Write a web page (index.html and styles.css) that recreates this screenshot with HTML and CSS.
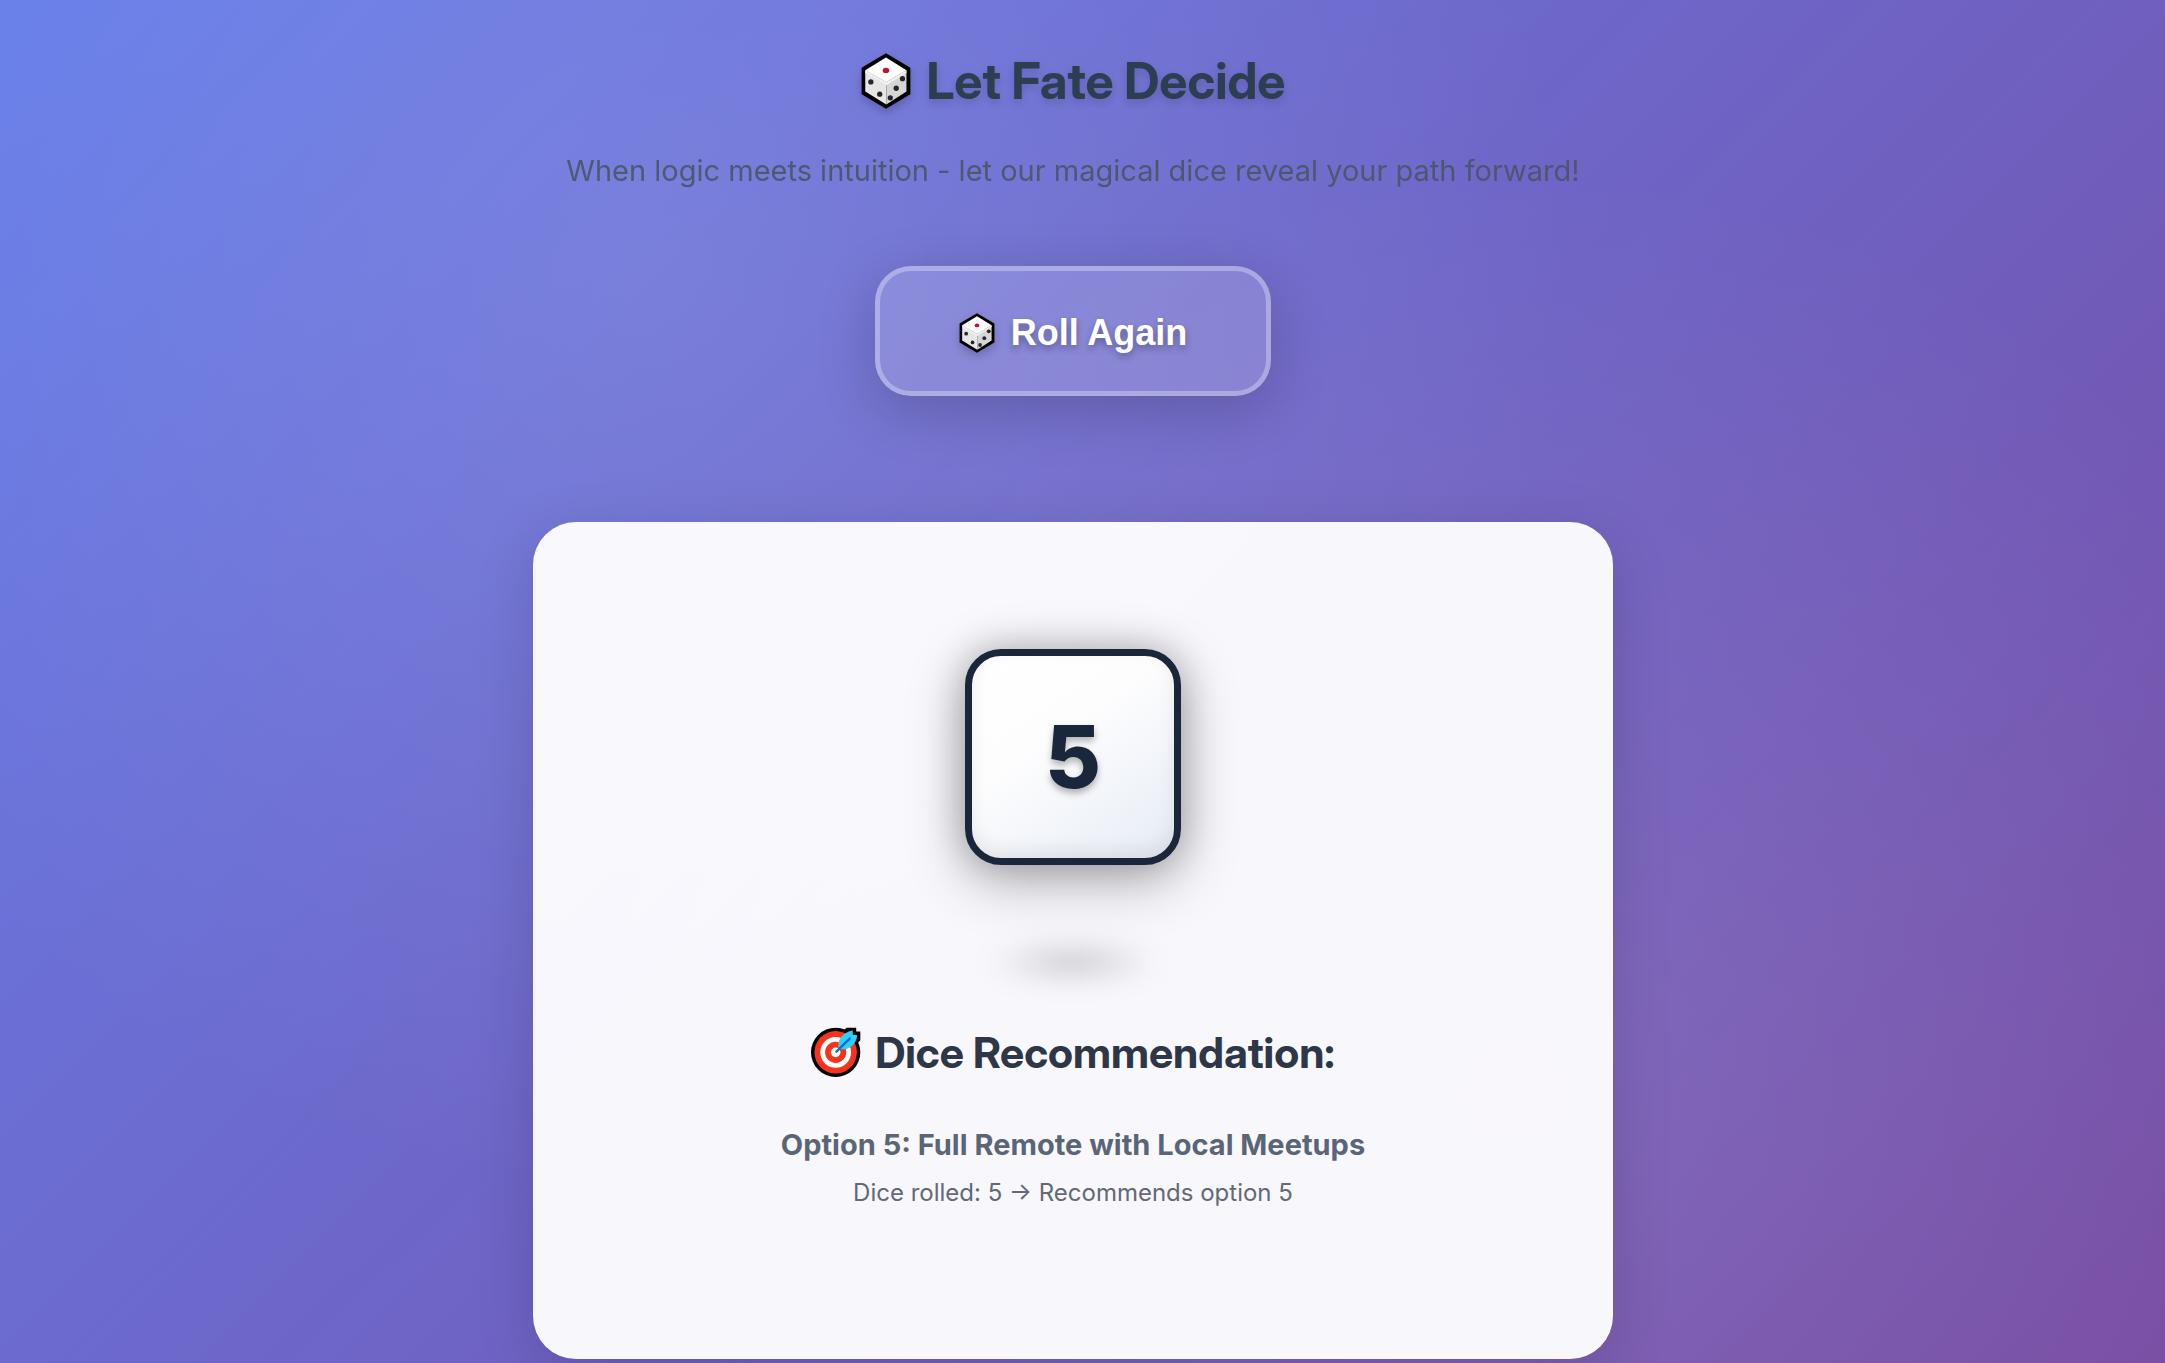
FILE: index.html
```html
<!doctype html>
<html lang="en">
<head>
<meta charset="utf-8">
<title>Let Fate Decide</title>
<link rel="stylesheet" href="styles.css">
</head>

<body>

<svg class="sprites" aria-hidden="true">
  <symbol id="die" viewBox="0 0 150 170">
    <path d="M75 1 149 45V125L75 169 1 125V45Z" fill="#000"/>
    <path d="M75 14 137 52 76 89 12 52Z" fill="#fff"/>
    <path d="M12 52 76 89V156L12 117Z" fill="#e6e6e6"/>
    <path d="M76 89 137 52V117L76 156Z" fill="#d6d6d6"/>
    <path d="M12 52 76 89 137 52V60L76 98 12 60Z" fill="#f0f0f0"/>
    <ellipse cx="75" cy="53" rx="10" ry="8" fill="#c8102e"/>
    <g fill="#262626">
      <circle cx="29" cy="88" r="8"/>
      <circle cx="56" cy="125" r="8"/>
      <circle cx="125" cy="78" r="8"/>
      <circle cx="106" cy="107" r="8"/>
      <circle cx="88" cy="136" r="8"/>
    </g>
  </symbol>
  <symbol id="target" viewBox="0 0 146 146">
    <circle cx="72" cy="74" r="72" fill="#000"/>
    <path d="M80 26 104 2H132V13H144V39L119 66Z" fill="#000"/>
    <circle cx="72" cy="74" r="62" fill="#f8321b"/>
    <circle cx="72" cy="74" r="45" fill="#fff"/>
    <circle cx="72" cy="74" r="31" fill="#f8321b"/>
    <circle cx="72" cy="74" r="14" fill="#fff"/>
    <path d="M81 64C76 42 88 16 122 10V23H135C133 54 106 70 81 64Z" fill="#31cdfb"/>
    <path d="M74 72 113 34" stroke="#0873cf" stroke-width="7" stroke-linecap="round"/>
  </symbol>
</svg>

<main>
  <header>
    <h1><svg class="icon" aria-hidden="true"><use href="#die"/></svg>Let Fate Decide</h1>
    <p>When logic meets intuition - let our magical dice reveal your path forward!</p>
  </header>

  <button id="roll" class="roll" type="button"><svg class="icon" aria-hidden="true"><use href="#die"/></svg>Roll Again</button>

  <section class="result">
    <div class="dice">5</div>
    <div class="dice-shadow"></div>
    <h2><svg class="icon" aria-hidden="true"><use href="#target"/></svg>Dice Recommendation:</h2>
    <p class="option">Option 5: Full Remote with Local Meetups</p>
    <p class="rolled">Dice rolled: 5 → Recommends option 5</p>
  </section>
</main>

</body>
</html>
```
FILE: styles.css
```css
* {
  box-sizing: border-box;
}

body {
  margin: 0;
  padding: 0 19px 0 0;
  min-height: 100vh;
  font-family: Inter, sans-serif;
  color: #2d3748;
  background:
    radial-gradient(circle at 30% 20%, rgba(255, 255, 255, 0.1), transparent 50%),
    radial-gradient(circle at 70% 80%, rgba(255, 255, 255, 0.1), transparent 50%),
    linear-gradient(135deg, #667eea 0%, #764ba2 100%);
}

.sprites {
  display: none;
}

main {
  display: flex;
  flex-direction: column;
  align-items: center;
  padding-top: 46px;
}

header {
  text-align: center;
}

h1, h2, p {
  margin: 0;
}

h1, h2 {
  display: flex;
  justify-content: center;
  align-items: center;
  font-family: "Inter Display", Inter, sans-serif;
  font-weight: 700;
  font-variation-settings: "opsz" 32;
}

h1 {
  gap: 16px;
  font-size: 50px;
  line-height: 70px;
  color: #2c3e50;
  text-shadow: 0 4px 8px rgba(0, 0, 0, 0.15);
}

h1 .icon {
  width: 50px;
  height: 56px;
}

.icon {
  filter: drop-shadow(0 4px 4px rgba(0, 0, 0, 0.2));
}

header p {
  margin-top: 30px;
  font-size: 29px;
  line-height: 50px;
  color: #4a5568;
  opacity: 0.9;
}

.roll {
  display: flex;
  align-items: center;
  gap: 16px;
  margin-top: 70px;
  padding: 41px 79px 37px;
  border: 5px solid rgba(255, 255, 255, 0.3);
  border-radius: 36px;
  background: rgba(255, 255, 255, 0.15);
  box-shadow: 0 14px 58px rgba(0, 0, 0, 0.2);
  color: #fff;
  font: 700 36px/42px "Liberation Sans", sans-serif;
  text-shadow: 0 4px 7px rgba(0, 0, 0, 0.3);
  cursor: pointer;
}

.roll .icon {
  width: 36px;
  height: 40px;
}

.result {
  display: flex;
  flex-direction: column;
  align-items: center;
  width: 100%;
  max-width: 1080px;
  margin-top: 126px;
  padding: 127px 54px 146px;
  border-radius: 43px;
  background: rgba(255, 255, 255, 0.95);
  box-shadow: 0 14px 58px rgba(0, 0, 0, 0.15);
}

.dice {
  display: flex;
  justify-content: center;
  align-items: center;
  width: 216px;
  height: 216px;
  border: 7px solid #1a2639;
  border-radius: 36px;
  background: linear-gradient(145deg, #fff 0%, #fdfdfe 40%, #e6ecf5 100%);
  box-shadow:
    0 14px 58px rgba(0, 0, 0, 0.3),
    0 0 36px rgba(0, 0, 0, 0.2),
    inset 0 -7px 18px rgba(0, 0, 0, 0.08);
  font-size: 86px;
  font-weight: 800;
  color: #1a2639;
  text-shadow: 0 4px 7px rgba(0, 0, 0, 0.3);
}

.dice-shadow {
  width: 180px;
  height: 36px;
  margin-top: 79px;
  border-radius: 50%;
  background: radial-gradient(ellipse, rgba(0, 0, 0, 0.25), transparent 70%);
  filter: blur(14px);
}

h2 {
  gap: 14px;
  margin-top: 44px;
  font-size: 43px;
  line-height: 56px;
}

h2 .icon {
  width: 50px;
  height: 50px;
  filter: none;
}

.option {
  margin-top: 41px;
  font-size: 29px;
  font-weight: 700;
  line-height: 48px;
  color: #5a6578;
}

.rolled {
  margin-top: 4px;
  font-size: 24px;
  line-height: 40px;
  color: #626978;
}
```
